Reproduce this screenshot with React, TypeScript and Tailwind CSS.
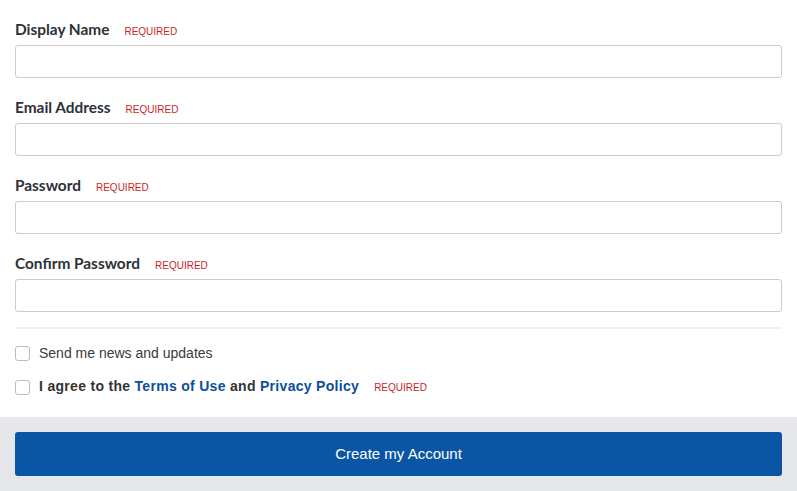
import React from "react";

const fields = ["Display Name", "Email Address", "Password", "Confirm Password"];

const Required: React.FC = () => (
  <span className="ml-[15px] text-[10px] font-normal tracking-normal text-[#cc1f27] font-['Liberation_Sans',Arial,sans-serif]">
    REQUIRED
  </span>
);

const Field: React.FC<{ label: string }> = ({ label }) => (
  <div className="mb-[19px]">
    <label className="block h-5 leading-5 mb-[6px] text-[15.4px] font-bold text-[#2d3238] font-['Lato',sans-serif]">
      {label}
      <Required />
    </label>
    <input
      type={label.includes("Password") ? "password" : "text"}
      className="block w-full h-[33px] rounded-[3px] border border-[#cccccc] bg-white px-2 text-sm outline-none"
    />
  </div>
);

export default function App() {
  return (
    <div className="w-[797px] h-[491px] bg-white font-['Liberation_Sans',Arial,sans-serif]">
      <div className="px-[15px] pt-[19px]">
        {fields.map((f) => (
          <Field key={f} label={f} />
        ))}
        <div className="-mt-[4px] h-[2px] bg-[#f0f0f0]" />
        <div className="mt-[14px] flex items-center h-5 text-sm text-[#3a3a3a]">
          <span className="w-[15px] h-[15px] rounded-[3px] border border-[#bdbdbd] bg-white mr-[9px]" />
          Send me news and updates
        </div>
        <div className="mt-[14px] flex items-center h-5 text-sm font-bold text-[#333333]">
          <span className="w-[15px] h-[15px] rounded-[3px] border border-[#bdbdbd] bg-white mr-[9px]" />
          <span className="tracking-[0.3px] leading-5">
            I agree to the <a className="text-[#0b4f9c]">Terms of Use</a> and{" "}
            <a className="text-[#0b4f9c]">Privacy Policy</a>
            <Required />
          </span>
        </div>
      </div>
      <div className="mt-[20px] bg-[#e6e7ea] px-[15px] py-[15px]">
        <button className="w-full h-[44px] rounded-[3px] bg-[#0a55a4] text-white text-[15px]">
          Create my Account
        </button>
      </div>
    </div>
  );
}
